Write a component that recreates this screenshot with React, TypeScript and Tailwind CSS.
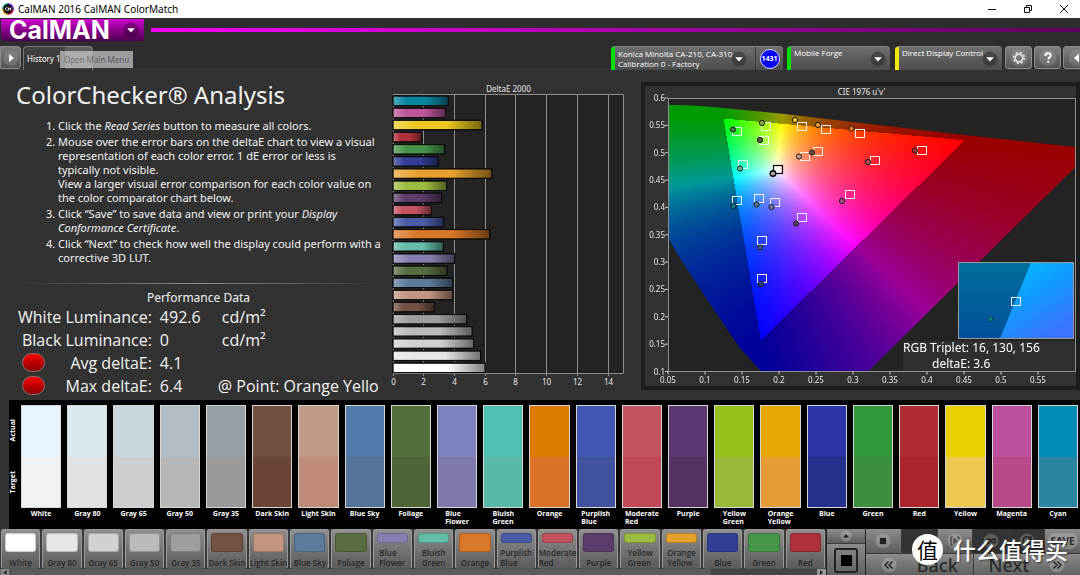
import { useEffect, useRef } from "react";
import type { ReactNode } from "react";

type Patch = { name: string; actual: string; target: string; color: string; error: number };

const patches: Patch[] = [
  { name: "White", actual: "#e8f4ff", target: "#f2f2f2", color: "#ffffff", error: 6.0 },
  { name: "Gray 80", actual: "#dbe8f0", target: "#e2e2e2", color: "#e6e6e6", error: 5.7 },
  { name: "Gray 65", actual: "#c9d5dc", target: "#cecece", color: "#d1d1d1", error: 5.25 },
  { name: "Gray 50", actual: "#b2bdc6", target: "#b7b7b7", color: "#bababa", error: 5.16 },
  { name: "Gray 35", actual: "#979fa6", target: "#9a9a9a", color: "#9e9e9e", error: 4.8 },
  { name: "Dark Skin", actual: "#715040", target: "#6a4535", color: "#735143", error: 2.7 },
  { name: "Light Skin", actual: "#bf9b85", target: "#be8c78", color: "#c39580", error: 3.88 },
  { name: "Blue Sky", actual: "#527aaa", target: "#547399", color: "#5d7b9d", error: 3.88 },
  { name: "Foliage", actual: "#516e3b", target: "#506537", color: "#5a6c41", error: 3.53 },
  { name: "Blue Flower", actual: "#7d81bd", target: "#7d79aa", color: "#8580b1", error: 4.0 },
  { name: "Bluish Green", actual: "#4dc2b2", target: "#59b9a7", color: "#63bda9", error: 3.28 },
  { name: "Orange", actual: "#db7c00", target: "#d97127", color: "#da7829", error: 6.3 },
  { name: "Purplish Blue", actual: "#4058b4", target: "#41529f", color: "#4a5ba8", error: 3.3 },
  { name: "Moderate Red", actual: "#c55261", target: "#bf4956", color: "#c55361", error: 2.5 },
  { name: "Purple", actual: "#5a3972", target: "#543161", color: "#5c3c6b", error: 3.17 },
  { name: "Yellow Green", actual: "#96c11c", target: "#99b837", color: "#9ebc3f", error: 3.5 },
  { name: "Orange Yellow", actual: "#e5a800", target: "#e49d36", color: "#e6a12d", error: 6.42 },
  { name: "Blue", actual: "#2a34a6", target: "#272f8d", color: "#343e97", error: 2.95 },
  { name: "Green", actual: "#32983c", target: "#3d8f3d", color: "#479549", error: 3.37 },
  { name: "Red", actual: "#b02c34", target: "#a9242d", color: "#af313c", error: 1.87 },
  { name: "Yellow", actual: "#ead000", target: "#eec951", color: "#ecc820", error: 5.8 },
  { name: "Magenta", actual: "#bb4f9b", target: "#b84989", color: "#bd5598", error: 3.43 },
  { name: "Cyan", actual: "#008cb4", target: "#2a85a0", color: "#0885a1", error: 3.6 },
];

const twoLine = (name: string) => name.includes(" ") && !/^(Gray|Dark|Light)|Sky/.test(name);

const targets: [number, number][] = [
  [97.5, 51.5], [126.5, 46.5], [162.5, 46.5], [186, 49.5], [220, 53], [124.5, 60.5], [103.5, 84.5],
  [165, 76], [178.5, 71.5], [235.5, 80.5], [282.5, 70], [97.5, 120.5], [119.5, 118.5], [135.5, 122.5],
  [210, 114.5], [162.5, 137.5], [122, 160], [122, 198],
];

const measured: [number, number, string][] = [
  [93, 49.5, "#3d7a45"], [122, 43, "#93b03e"], [155, 40, "#f0c829"], [178, 45, "#e9a030"], [211.5, 48.5, "#dd7a2c"],
  [120, 60, "#4f5f38"], [100, 88.5, "#5fb5a2"], [159, 76.5, "#c49882"], [172, 72.5, "#6d4a3d"], [228, 82, "#b14a58"],
  [275, 70.5, "#a33039"], [93.5, 126, "#0c8095"], [116.5, 124.5, "#557396"], [131.5, 127, "#7a76a5"],
  [202, 121, "#a84d88"], [156, 143.5, "#5a3a68"], [120, 167.5, "#435399"], [121, 204, "#323c80"],
];

function DropArrow({ className = "" }: { className?: string }) {
  return (
    <svg viewBox="0 0 16 16" className={"size-4 shrink-0 " + className} aria-hidden="true">
      <circle cx="8" cy="8" r="7.5" fill="#000" fillOpacity="0.28" />
      <path d="M4.2 6.3h7.6L8 10.6z" fill="#fff" />
    </svg>
  );
}

function TitleBar() {
  return (
    <header className="flex h-[18px] items-center bg-white pr-3 pl-[2px] text-black">
      <svg viewBox="0 0 12 12" className="size-3" aria-hidden="true">
        <path d="M6 6V0a6 6 0 0 1 6 6z" fill="#8a3cf0" />
        <path d="M6 6h6a6 6 0 0 1-6 6z" fill="#e0306a" />
        <path d="M6 6v6a6 6 0 0 1-6-6z" fill="#e8a020" />
        <path d="M6 6H0a6 6 0 0 1 6-6z" fill="#20b890" />
        <circle cx="6" cy="6" r="4.700" fill="#080808" />
        <path d="M5.600 4.800a1.400 1.400 0 1 0 0 2.400M6.500 7.600V4.700l1.100 1.600 1.100-1.600v2.900" fill="none" stroke="#fff" strokeWidth="0.900" />
      </svg>
      <h1 className="ml-1 text-[10px] leading-4">CalMAN 2016 CalMAN ColorMatch</h1>
      <div className="ml-auto flex items-center gap-7">
        <button aria-label="Minimize"><svg viewBox="0 0 8 8" className="size-2"><path d="M0 4.500h8" stroke="#111" /></svg></button>
        <button aria-label="Restore"><svg viewBox="0 0 8 8" className="size-2"><path d="M.5 2.500h5v5h-5zM2.500 2.500V.5h5v5h-2" fill="none" stroke="#111" /></svg></button>
        <button aria-label="Close"><svg viewBox="0 0 8 8" className="size-2"><path d="M0 0l8 8M8 0L0 8" stroke="#111" /></svg></button>
      </div>
    </header>
  );
}

function DeviceTab({ stripe, children, badge }: { stripe: string; children: ReactNode; badge?: ReactNode }) {
  return (
    <div className="flex h-6 rounded-t-[4px] border-t border-[#858585] bg-linear-to-b from-[#6e6e6e] to-[#4c4c4c]">
      <button className="flex items-center text-left">
        <span className={"mr-[3px] h-full w-1 shrink-0 rounded-tl-[3px] " + stripe} />
        {children}
      </button>
      {badge}
    </div>
  );
}

function SquareButton({ label, children }: { label: string; children: ReactNode }) {
  return (
    <button aria-label={label} className="flex h-[23px] w-[27px] shrink-0 items-center justify-center rounded-[3px] border border-[#8c8c8c] bg-linear-to-b from-[#808080] to-[#555]">
      <svg viewBox="0 0 18 18" className="size-[18px]">
        <circle cx="9" cy="9" r="8.500" fill="#fff" fillOpacity="0.12" />
        {children}
      </svg>
    </button>
  );
}

function TopBar() {
  return (
    <div className="bg-[#2d2d2d]">
      <div className="flex h-[27px] items-start gap-[7px] pl-px pt-px">
        <button aria-label="CalMAN main menu" className="flex h-[22px] w-[143px] shrink-0 items-center justify-between rounded-b-[2px] bg-linear-to-b from-[#cf00cf] to-[#4d0050] pr-[5px] pl-2">
          <span className="font-['Inter'] text-[25px] leading-[22px] font-bold text-white">CalMAN</span>
          <DropArrow />
        </button>
        <div className="mt-[9px] h-1 flex-1 bg-linear-to-r from-[#f800f8] via-[#b000b0] to-[#5c005c]" />
      </div>
      <div className="flex h-[25px] items-start border-b border-[#3a3a3a] pt-px">
        <button aria-label="Expand" className="flex h-[23px] w-[21px] items-center justify-center rounded-r-[3px] border border-[#8a8a8a] bg-linear-to-b from-[#7d7d7d] to-[#565656]">
          <svg viewBox="0 0 16 16" className="size-4"><circle cx="8" cy="8" r="7.500" fill="#999" fillOpacity="0.35" /><path d="M6 4l5 4-5 4z" fill="#fff" /></svg>
        </button>
        <div className="relative ml-[2px]">
          <button className="block h-6 w-[70px] rounded-t-[4px] border border-b-0 border-[#777] bg-linear-to-b from-[#444] to-[#303030] pl-[3px] text-left text-[8px] text-white">History 1</button>
          <span className="absolute top-[5px] left-[37px] h-[17px] w-[73px] bg-[#a9aaac]/90 text-center text-[8px] leading-[18px] whitespace-nowrap text-[#5c5c5c]">Open Main Menu</span>
          <span className="absolute top-0 left-[42px] h-[23px] w-[27px] rounded-[3px] bg-white/15" />
        </div>
        <div className="ml-auto flex items-start font-['Open_Sans'] text-[8px] leading-[10px] text-white">
          <DeviceTab
            stripe="bg-[#00e000]"
            badge={
              <span className="flex w-[28px] items-center justify-center border-l border-[#3b3b3b]">
                <span className="flex size-5 items-center justify-center rounded-full border border-[#d8d8ff] bg-[#0000f5] text-[7px] font-bold text-white">1431</span>
              </span>
            }
          >
            <span className="w-[113px] whitespace-nowrap">Konica Minolta CA-210, CA-310<br />Calibration 0 - Factory</span>
            <DropArrow className="mr-2" />
          </DeviceTab>
          <div className="ml-1">
            <DeviceTab stripe="bg-[#00e000]">
              <span className="w-[76px] self-start pt-px whitespace-nowrap">Mobile Forge</span>
              <DropArrow className="mr-1" />
            </DeviceTab>
          </div>
          <div className="ml-[5px]">
            <DeviceTab stripe="bg-[#f0e800]">
              <span className="w-[80px] self-start pt-px whitespace-nowrap">Direct Display Control</span>
              <DropArrow className="mr-1" />
            </DeviceTab>
          </div>
          <div className="-mr-[10px] ml-[3px] flex gap-[2px]">
            <SquareButton label="Settings">
              <circle cx="9" cy="9" r="3.800" fill="none" stroke="#e8e8e8" strokeWidth="1.500" />
              <circle cx="9" cy="9" r="5.300" fill="none" stroke="#e8e8e8" strokeWidth="1.600" strokeDasharray="2.080 2.080" />
            </SquareButton>
            <SquareButton label="Help">
              <path d="M6.300 7q0-2.700 2.700-2.700t2.700 2.400c0 1.800-2.500 1.600-2.500 3.600M9.200 11.800v2" fill="none" stroke="#fff" strokeWidth="1.900" />
            </SquareButton>
            <SquareButton label="Collapse">
              <path d="M11 4.500L6 9l5 4.500z" fill="#fff" />
            </SquareButton>
          </div>
        </div>
      </div>
    </div>
  );
}

function Lamp() {
  return <span className="-mr-[27px] ml-[22px] block h-[19px] w-[23px] rounded-full border border-[#8a7070] bg-linear-to-b from-[#f80000] to-[#8c0000]" />;
}

function Instructions() {
  return (
    <section className="flex flex-col text-[#f2f2f2]">
      <h2 className="pt-[9px] pl-4 text-[24px] leading-8 whitespace-nowrap">ColorChecker® Analysis</h2>
      <ol className="mt-2 flex list-decimal flex-col gap-[2px] pl-[58px] text-[11px] leading-[14px]">
        <li>Click the <em>Read Series</em> button to measure all colors.</li>
        <li>
          Mouse over the error bars on the deltaE chart to view a visual representation of each color error. 1 dE error or less is<br />typically not visible.
          <br />
          View a larger visual error comparison for each color value on the color comparator chart below.
        </li>
        <li>Click “Save” to save data and view or print your <em>Display Conformance Certificate</em>.</li>
        <li>Click “Next” to check how well the display could perform with a corrective 3D LUT.</li>
      </ol>
      <div className="mt-[18px] mr-1 ml-4 h-px bg-linear-to-r from-transparent via-[#909090] to-transparent" />
      <table className="mt-[7px] w-full text-left font-['Open_Sans'] text-[16px] leading-[22px] whitespace-nowrap">
        <caption className="pl-3 text-center font-['Noto_Sans'] text-[12px] leading-[14px]">Performance Data</caption>
        <tbody>
          <tr className="h-[23px]"><td className="w-0" /><th className="w-[130px] text-right font-normal">White Luminance:</th><td className="w-[66px] pl-2">492.6</td><td className="pl-1">cd/m²</td></tr>
          <tr className="h-[23px]"><td /><th className="text-right font-normal">Black Luminance:</th><td className="pl-2">0</td><td className="pl-1">cd/m²</td></tr>
          <tr className="h-[23px]"><td><Lamp /></td><th className="text-right font-normal">Avg deltaE:</th><td className="pl-2">4.1</td><td /></tr>
          <tr className="h-[23px]"><td><Lamp /></td><th className="text-right font-normal">Max deltaE:</th><td className="pl-2">6.4</td><td>@ Point: Orange Yello</td></tr>
        </tbody>
      </table>
    </section>
  );
}

function DeltaChart() {
  const rows = [...patches].reverse();
  return (
    <svg viewBox="0 0 255 310" className="mt-[10px] w-full" role="img" aria-label="DeltaE 2000 bar chart" fontSize="8" fill="#e6e6e6">
      <defs>
        <linearGradient id="shine">
          <stop offset="0" stopColor="#fff" stopOpacity="0.300" />
          <stop offset="0.250" stopColor="#fff" stopOpacity="0" />
          <stop offset="0.600" stopColor="#000" stopOpacity="0" />
          <stop offset="1" stopColor="#000" stopOpacity="0.500" />
        </linearGradient>
      </defs>
      <text x="123.500" y="12" textAnchor="middle">DeltaE 2000</text>
      <rect x="8" y="15" width="230.500" height="278.500" fill="#232323" />
      {[0, 2, 4, 6, 8, 10, 12, 14].map((t) => {
        const x = Math.floor(8 + t * 15.36) + 0.5;
        return (
          <g key={t}>
            <path d={`M${x} 15V296`} stroke="#8c8c8c" />
            <text x={x} y="305" textAnchor="middle">{t}</text>
          </g>
        );
      })}
      <path d="M8 14.500H238.500V293.500H8" fill="none" stroke="#8c8c8c" />
      {rows.map((p, i) => {
        const y = 16 + i * 12.14;
        return (
          <g key={p.name} stroke="#0d0d0d">
            <rect x="8" y={y} width={p.error * 15.36} height="9.500" fill={p.color} />
            <rect x="8" y={y} width={p.error * 15.36} height="9.500" fill="url(#shine)" />
          </g>
        );
      })}
    </svg>
  );
}

function chromaticityColor(u: number, v: number): [number, number, number] {
  const X = (9 * u) / (4 * v);
  const Z = (12 - 3 * u - 20 * v) / (4 * v);
  const lin = [
    3.2406 * X - 1.5372 - 0.4986 * Z,
    -0.9689 * X + 1.8758 + 0.0415 * Z,
    0.0557 * X - 0.204 + 1.057 * Z,
  ];
  const inside = Math.min(...lin) >= 0;
  const peak = Math.max(...lin);
  const scale = inside ? 255 : 153;
  return lin.map((c) => scale * (Math.max(0, c) / peak)) as [number, number, number];
}

function ChromaticityField({ w, h }: { w: number; h: number }) {
  const ref = useRef<HTMLCanvasElement>(null);
  useEffect(() => {
    const ctx = ref.current?.getContext("2d");
    if (!ctx) return;
    const img = ctx.createImageData(w, h);
    for (let y = 0; y < h; y++) {
      for (let x = 0; x < w; x++) {
        const [r, g, b] = chromaticityColor(0.05 + ((x + 0.5) / w) * 0.55, 0.6 - ((y + 0.5) / h) * 0.5);
        img.data.set([r, g, b, 255], (y * w + x) * 4);
      }
    }
    ctx.putImageData(img, 0, 0);
  }, [w, h]);
  return <canvas ref={ref} width={w} height={h} className="block h-full w-full" />;
}

function CieChart() {
  const ys = [0.6, 0.55, 0.5, 0.45, 0.4, 0.35, 0.3, 0.25, 0.2, 0.15, 0.1];
  const xs = [0.05, 0.1, 0.15, 0.2, 0.25, 0.3, 0.35, 0.4, 0.45, 0.5, 0.55];
  return (
    <svg viewBox="0 0 440 310" className="mt-[10px] w-full" role="img" aria-label="CIE 1976 u'v' chart" fontSize="8" fill="#e6e6e6">
      <defs>
        <clipPath id="locus">
          <path d="M28 25Q48 24.500 68 26.500L140 33.500 320 54.500 435 67V87.500L228 291.500H121L100 268 66 218 40 178 28 158z" />
        </clipPath>
        <linearGradient id="insetOuter" x2="0" y2="1">
          <stop offset="0" stopColor="#00709c" />
          <stop offset="1" stopColor="#004f9a" />
        </linearGradient>
        <linearGradient id="insetInner" x2="0.600" y2="1">
          <stop offset="0" stopColor="#00c4ff" />
          <stop offset="0.500" stopColor="#0f9cff" />
          <stop offset="1" stopColor="#3a74ff" />
        </linearGradient>
      </defs>
      <rect x="3" y="4" width="435" height="304" fill="#323232" stroke="#1d1d1d" strokeWidth="4" />
      <text x="221.500" y="15" textAnchor="middle">CIE 1976 u'v'</text>
      <rect x="28" y="18" width="407.500" height="273.500" fill="#232323" />
      <g clipPath="url(#locus)">
        <foreignObject x="28" y="18" width="407" height="274">
          <ChromaticityField w={407} h={274} />
        </foreignObject>
      </g>
      <rect x="28.500" y="18.500" width="407" height="273" fill="none" stroke="#909090" />
      {ys.map((t, i) => (
        <g key={t}>
          <path d={`M25 ${18 + i * 27.35}h3`} stroke="#ccc" />
          <text x="25" y={21 + i * 27.35} textAnchor="end">{t}</text>
        </g>
      ))}
      {xs.map((t, i) => (
        <g key={t}>
          <path d={`M${28 + i * 37} 291.500v3`} stroke="#ccc" />
          <text x={28 + i * 37} y="303" textAnchor="middle">{t}</text>
        </g>
      ))}
      {targets.map(([x, y]) => (
        <rect key={`${x}-${y}`} x={Math.floor(x) - 4.5} y={Math.floor(y) - 3.5} width="9" height="8" fill="none" stroke="#f0f0f0" />
      ))}
      <rect x="133.500" y="85.500" width="9" height="8" fill="none" stroke="#000" strokeWidth="1.200" />
      {measured.map(([x, y, c]) => (
        <circle key={`${x}-${y}`} cx={x} cy={y} r="2.600" fill={c} stroke="#1a1a1a" />
      ))}
      <circle cx="133" cy="93.500" r="2.800" fill="#aaa" stroke="#000" strokeWidth="1.400" />
      <rect x="318.500" y="182.500" width="115" height="76" fill="url(#insetOuter)" />
      <path d="M391 182.500H433.500V258.500H360z" fill="url(#insetInner)" />
      <rect x="318.500" y="182.500" width="115" height="76" fill="none" stroke="#9a9a9a" />
      <rect x="371.500" y="217.500" width="9" height="8" fill="none" stroke="#f0f0f0" />
      <circle cx="350.500" cy="239" r="2.400" fill="#0c8095" stroke="#143a44" />
      <rect x="263" y="261" width="172" height="30" fill="#2f2f2f" />
      <text x="263" y="272" fontSize="12" fill="#fff">RGB Triplet: 16, 130, 156</text>
      <text x="292" y="288" fontSize="12" fill="#fff">deltaE: 3.6</text>
    </svg>
  );
}

function Comparator() {
  return (
    <section className="ml-[9px] flex h-[129px] bg-black pt-[5px] pr-[2px] font-['Open_Sans'] text-[7px] leading-[8px] font-bold text-white">
      <div className="flex h-[103px] w-3 shrink-0 flex-col justify-around">
        <span className="rotate-180 text-center [writing-mode:vertical-rl]">Actual</span>
        <span className="rotate-180 text-center [writing-mode:vertical-rl]">Target</span>
      </div>
      <ul className="grid flex-1 grid-cols-[repeat(23,minmax(0,1fr))] gap-[6px]">
        {patches.map((p) => (
          <li key={p.name} className="flex flex-col items-center">
            <div className="flex h-[103px] w-full flex-col border border-[#d6d6d6]">
              <span className="flex-1" style={{ background: p.actual }} />
              <span className="flex-1" style={{ background: p.target }} />
            </div>
            <span className={"mt-[2px] " + (twoLine(p.name) ? "w-min" : "whitespace-nowrap")}>{p.name}</span>
          </li>
        ))}
      </ul>
    </section>
  );
}

function RoundIcon({ children }: { children: ReactNode }) {
  return (
    <svg viewBox="0 0 18 18" className="size-4 shrink-0" aria-hidden="true" fill="none" stroke="#222">
      <circle cx="9" cy="9" r="8.500" fill="#fff" fillOpacity="0.200" stroke="none" />
      {children}
    </svg>
  );
}

const lightKey = "flex items-center justify-center bg-linear-to-b from-[#8c8c8c] to-[#5e5e5e]";
const darkKey = "flex items-center justify-center bg-[#333]";

function BottomBar() {
  return (
    <footer className="relative flex h-[47px] bg-[#3a3a3a] text-[#2a2a2a]">
      <div className="flex min-w-0 flex-1 flex-col">
        <div className="grid h-10 grid-cols-[repeat(20,minmax(0,1fr))] gap-[2px] px-px">
          {patches.slice(0, 20).map((p) => (
            <button key={p.name} className="flex flex-col items-center rounded-[3px] border border-[#9a9a9a] border-b-[#555] bg-linear-to-b from-[#8f8f8f] to-[#5b5b5b] px-[3px] pt-[3px] text-left font-['Open_Sans'] text-[8px] leading-[10px] font-semibold">
              <span className={"w-full shrink-0 rounded-[3px] border border-black/20 " + (twoLine(p.name) ? "h-[10px]" : "h-[19px]")} style={{ background: p.color }} />
              <span className={"mt-auto " + (twoLine(p.name) ? "w-min" : "whitespace-nowrap")}>{p.name}</span>
            </button>
          ))}
        </div>
        <div className="flex h-[7px] items-center bg-[#444]">
          <svg viewBox="0 0 9 7" className="h-[7px] w-[10px]" aria-hidden="true"><rect width="9" height="7" fill="#888" /><path d="M6 1L3 3.500 6 6z" fill="#222" /></svg>
          <div className="mr-[106px] ml-px h-[7px] flex-1 rounded-r-[3px] bg-[#5b5b5b]" />
          <svg viewBox="0 0 9 7" className="h-[7px] w-[9px]" aria-hidden="true"><rect width="9" height="7" fill="#999" /><path d="M3 1l3 2.500L3 6z" fill="#222" /></svg>
        </div>
      </div>
      <div className="flex w-10 shrink-0 flex-col gap-px border-x border-[#222]">
        <button aria-label="Scroll up" className={"h-[14px] " + lightKey}>
          <svg viewBox="0 0 12 12" className="size-3"><circle cx="6" cy="6" r="5.500" fill="#fff" fillOpacity="0.200" /><path d="M3 7.500h6L6 4z" fill="#222" /></svg>
        </button>
        <button aria-label="Pattern window" className={"flex-1 " + lightKey}>
          <span className="flex h-[25px] w-6 items-center justify-center rounded-[3px] border-2 border-[#222]"><span className="size-[11px] bg-black" /></span>
        </button>
      </div>
      <div className="grid w-[214px] shrink-0 grid-rows-[24px_22px] gap-y-px">
        <div className="grid grid-cols-6 gap-px">
          <button aria-label="Stop" className={lightKey}><RoundIcon><rect x="5.500" y="5.500" width="7" height="7" fill="#222" stroke="none" /></RoundIcon></button>
          <button aria-label="Play" className={darkKey} />
          <button aria-label="Read series" className={lightKey}><RoundIcon><path d="M6.500 4.500h-2v9h2M11.500 4.500h2v9h-2M8 6.500l3 2.500-3 2.500z" /></RoundIcon></button>
          <button aria-label="Read continuous" className={darkKey}><RoundIcon><path d="M9 9c-2-3-5-3-5 0s3 3 5 0 5-3 5 0-3 3-5 0z" strokeWidth="1.500" /></RoundIcon></button>
          <button aria-label="Refresh" className={darkKey}><RoundIcon><path d="M13 6.500a4.500 4.500 0 1 0 .5 3M13.500 3.500v3.500H10" strokeWidth="1.500" /></RoundIcon></button>
          <button className={lightKey}><span className="rounded-full bg-white/20 px-[3px] text-[10px] leading-4 font-bold">SAVE</span></button>
        </div>
        <div className="grid grid-cols-2 gap-px text-[18px] leading-[22px] font-medium">
          <button className={"gap-5 " + lightKey}><RoundIcon><path d="M8.500 5l-4 4 4 4M13 5L9 9l4 4" strokeWidth="1.500" /></RoundIcon>Back</button>
          <button className={"gap-5 " + lightKey}>Next<RoundIcon><path d="M9.500 5l4 4-4 4M5 5l4 4-4 4" strokeWidth="1.500" /></RoundIcon></button>
        </div>
      </div>
      <div className="pointer-events-none absolute top-[5px] right-3 flex items-center gap-[10px] text-white">
        <span className="flex size-[31px] items-center justify-center rounded-full bg-white font-['Noto_Sans_CJK_SC',sans-serif] text-[21px] leading-[31px] text-black">值</span>
        <span className="font-['Noto_Sans_CJK_SC',sans-serif] text-[23px] leading-[31px] font-medium [text-shadow:1px_1px_2px_#0008]">什么值得买</span>
      </div>
    </footer>
  );
}

export default function App() {
  return (
    <div className="overflow-hidden bg-[#323232] font-['Noto_Sans',sans-serif]">
      <TitleBar />
      <TopBar />
      <main>
        <div className="grid grid-cols-[385fr_255fr_440fr] pb-[3px]">
          <Instructions />
          <DeltaChart />
          <CieChart />
        </div>
        <Comparator />
      </main>
      <BottomBar />
    </div>
  );
}
